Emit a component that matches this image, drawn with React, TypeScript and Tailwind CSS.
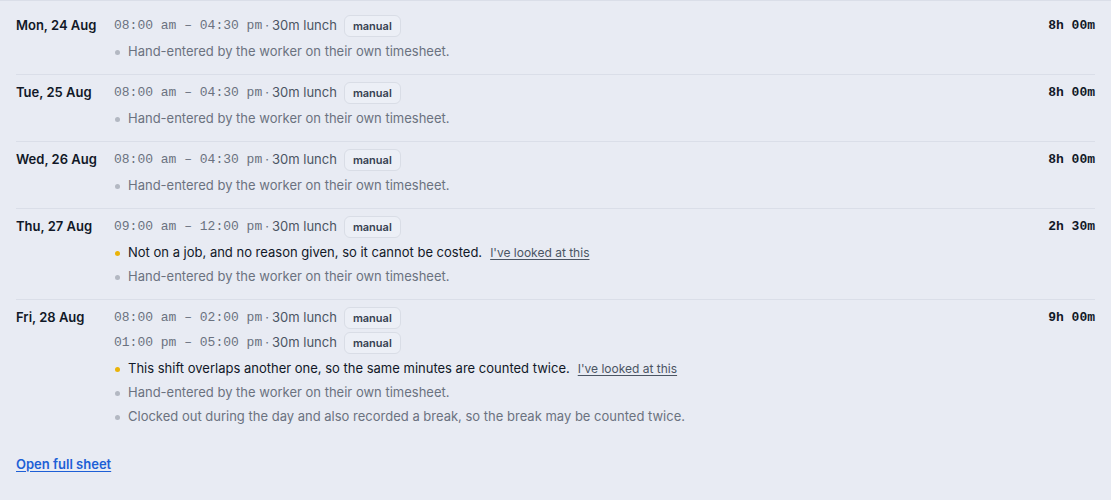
import React from "react";

type Note = { text: string; warn?: boolean };
type Day = { date: string; shifts: string[]; notes: Note[]; total: string };

const HAND = "Hand-entered by the worker on their own timesheet.";

const days: Day[] = [
  { date: "Mon, 24 Aug", shifts: ["08:00 am – 04:30 pm"], notes: [{ text: HAND }], total: "8h 00m" },
  { date: "Tue, 25 Aug", shifts: ["08:00 am – 04:30 pm"], notes: [{ text: HAND }], total: "8h 00m" },
  { date: "Wed, 26 Aug", shifts: ["08:00 am – 04:30 pm"], notes: [{ text: HAND }], total: "8h 00m" },
  {
    date: "Thu, 27 Aug",
    shifts: ["09:00 am – 12:00 pm"],
    notes: [
      { text: "Not on a job, and no reason given, so it cannot be costed.", warn: true },
      { text: HAND },
    ],
    total: "2h 30m",
  },
  {
    date: "Fri, 28 Aug",
    shifts: ["08:00 am – 02:00 pm", "01:00 pm – 05:00 pm"],
    notes: [
      { text: "This shift overlaps another one, so the same minutes are counted twice.", warn: true },
      { text: HAND },
      { text: "Clocked out during the day and also recorded a break, so the break may be counted twice." },
    ],
    total: "9h 00m",
  },
];

const mono = "font-['Liberation_Mono',monospace]";

const DayRow = ({ day, last }: { day: Day; last: boolean }) => {
  return (
    <div className={`flex items-start pt-1.5 pb-2.5 ${last ? "" : "border-b border-[#dadee8]"}`}>
      <div className="w-[98px] shrink-0 h-6 flex items-center text-[13px] font-semibold text-[#111827]">
        {day.date}
      </div>
      <div className="flex-1 flex flex-col">
        <div className="flex flex-col gap-px">
          {day.shifts.map((s) => (
            <div key={s} className="h-6 flex items-center text-[13px]">
              <span className={`${mono} text-[#6b7280]`}>{s}</span>
              <span className="text-[#6b7280] mx-[3px]">·</span>
              <span className="text-[#4b5563]">30m lunch</span>
              <span className="ml-[7px] h-[22px] px-2 flex items-center rounded-md border border-[#d9dde6] bg-[#eceff6] text-[11px] font-semibold text-[#374151]">
                manual
              </span>
            </div>
          ))}
        </div>
        <div className="flex flex-col mt-0.5">
          {day.notes.map((n) => (
            <div key={n.text} className="h-6 flex items-center gap-2 text-[13px]">
              <span
                className={`ml-px w-[5px] h-[5px] rounded-full ${n.warn ? "bg-[#eab308]" : "bg-[#b3b8c2]"}`}
              />
              <span className={n.warn ? "text-[#111827]" : "text-[#6b7280]"}>{n.text}</span>
              <>
                {n.warn && (
                  <span className="text-[12px] text-[#4b5563] underline underline-offset-2 decoration-[#4b5563]">
                    I've looked at this
                  </span>
                )}
              </>
            </div>
          ))}
        </div>
      </div>
      <div className={`h-6 flex items-center text-[13px] font-bold text-[#111827] ${mono}`}>{day.total}</div>
    </div>
  );
};

export default function App() {
  return (
    <div className="min-h-[500px] bg-[#e8ebf3] font-['Inter',sans-serif] border-t border-[#dadee8]">
      <div className="px-4 pt-[7px]">
        {days.map((d, i) => (
          <DayRow key={d.date} day={d} last={i === days.length - 1} />
        ))}
        <div className="mt-3">
          <a href="#" className="text-[13px] font-semibold text-[#1d5fd6] underline underline-offset-2">
            Open full sheet
          </a>
        </div>
      </div>
    </div>
  );
}
